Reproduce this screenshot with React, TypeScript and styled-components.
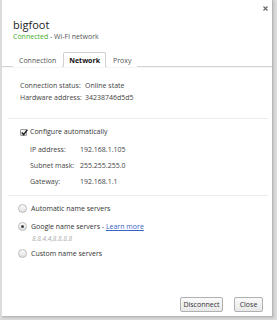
import styled, { createGlobalStyle } from "styled-components";

const Global = createGlobalStyle`
  html, body { margin: 0; padding: 0; background: #dcdcdc; }
  body { font-family: "Open Sans", "Noto Sans", sans-serif; color: #333; }
`;

const Page = styled.div`
  width: 277px;
  height: 320px;
  padding: 0 4px 3px 2px;
  box-sizing: border-box;
  display: flex;
`;

const Dialog = styled.div`
  flex: 1;
  background: #fff;
  border-right: 1px solid #b8b8b8;
  border-bottom: 1px solid #b8b8b8;
  box-shadow: 1px 1px 2px rgba(0, 0, 0, 0.12);
  display: flex;
  flex-direction: column;
  position: relative;
`;

const Header = styled.div`
  padding: 18px 0 0 11px;
  border-bottom: 1px solid #d4d4d4;
  box-shadow: 0 1px 1px rgba(0, 0, 0, 0.04);
`;

const Title = styled.div`
  font-size: 11px;
  line-height: 14px;
  color: #222;
`;

const Status = styled.div`
  font-size: 7px;
  line-height: 10px;
  color: #555;
  margin-bottom: 10px;
`;

const Green = styled.span`
  color: #3fae29;
`;

const CloseX = styled.svg`
  position: absolute;
  top: 6px;
  right: 4px;
`;

const Tabs = styled.div`
  display: flex;
  align-items: flex-end;
  margin-bottom: -1px;
`;

const Tab = styled.div<{ $active?: boolean }>`
  font-size: 7px;
  padding: 0 5px;
  height: 15px;
  line-height: 15px;
  box-sizing: border-box;
  color: ${(p) => (p.$active ? "#111" : "#555")};
  font-weight: ${(p) => (p.$active ? 700 : 400)};
  background: #fff;
  border: 1px solid ${(p) => (p.$active ? "#d0d0d0" : "transparent")};
  border-bottom-color: ${(p) => (p.$active ? "#fff" : "transparent")};
  border-radius: 2px 2px 0 0;
  margin-right: 1px;
`;

const Body = styled.div`
  flex: 1;
  padding: 13px 4px 0 6px;
  display: flex;
  flex-direction: column;
`;

const Section = styled.div<{ $pad?: string; $line?: boolean }>`
  padding: ${(p) => p.$pad || "0"};
  border-bottom: ${(p) => (p.$line ? "1px solid #ececec" : "none")};
`;

const InfoRow = styled.div<{ $indent?: number; $label?: number; $h?: number }>`
  display: flex;
  font-size: 7px;
  line-height: ${(p) => p.$h || 12}px;
  color: #444;
  padding-left: ${(p) => p.$indent || 0}px;

  & > span:first-child {
    width: ${(p) => p.$label || 65}px;
    flex-shrink: 0;
    white-space: nowrap;
  }
`;

const Check = styled.div`
  display: flex;
  align-items: center;
  gap: 3px;
  font-size: 7px;
  line-height: 12px;
  color: #333;
  padding-left: 12px;
  margin-bottom: 4px;
`;

const Box = styled.span`
  width: 7px;
  height: 7px;
  box-sizing: border-box;
  border: 1px solid #999;
  border-radius: 1px;
  background: linear-gradient(#fafafa, #e2e2e2);
  position: relative;
  display: inline-block;

  & svg {
    position: absolute;
    left: -1px;
    top: -2px;
  }
`;

const RadioRow = styled.div<{ $gap?: number }>`
  display: flex;
  align-items: center;
  gap: 4px;
  font-size: 7px;
  color: #333;
  padding-left: 10px;
  height: 12px;
  margin-bottom: ${(p) => p.$gap || 0}px;
`;

const Radio = styled.span<{ $on?: boolean }>`
  width: 9px;
  height: 9px;
  border: 1px solid #bbb;
  border-radius: 50%;
  box-sizing: border-box;
  background: linear-gradient(#fdfdfd, #e0e0e0);
  display: flex;
  align-items: center;
  justify-content: center;

  &::after {
    content: "";
    display: ${(p) => (p.$on ? "block" : "none")};
    width: 3px;
    height: 3px;
    border-radius: 50%;
    background: #444;
  }
`;

const Link = styled.span`
  color: #3a63c8;
  text-decoration: underline;
`;

const Dns = styled.div`
  font-size: 6.5px;
  font-style: italic;
  color: #aaa;
  padding-left: 24px;
  height: 15px;
  line-height: 14px;
`;

const Footer = styled.div`
  margin-top: auto;
  display: flex;
  justify-content: flex-end;
  gap: 11px;
  padding: 0 9px 4px 0;
`;

const Button = styled.button<{ $w: number }>`
  font-family: "Open Sans", "Noto Sans", sans-serif;
  font-size: 7px;
  color: #333;
  width: ${(p) => p.$w}px;
  height: 15px;
  padding: 0;
  border: 1px solid #b0b0b0;
  border-radius: 2px;
  background: linear-gradient(#fafafa, #e8e8e8);
`;

export default function App() {
  return (
    <Page>
      <Global />
      <Dialog>
        <CloseX width="5" height="5" viewBox="0 0 5 5">
          <path d="M0.5 0.5 L4.5 4.5 M4.5 0.5 L0.5 4.5" stroke="#666" strokeWidth="1.1" />
        </CloseX>
        <Header>
          <Title>bigfoot</Title>
          <Status>
            <Green>Connected</Green> - Wi-Fi network
          </Status>
          <Tabs>
            <Tab>Connection</Tab>
            <Tab $active>Network</Tab>
            <Tab>Proxy</Tab>
          </Tabs>
        </Header>
        <Body>
          <Section $line $pad="0 0 14px 12px">
            <InfoRow>
              <span>Connection status:</span>
              <span>Online state</span>
            </InfoRow>
            <InfoRow>
              <span>Hardware address:</span>
              <span>34238746d5d5</span>
            </InfoRow>
          </Section>
          <Section $line $pad="7px 0 5px 0">
            <Check>
              <Box>
                <svg width="9" height="9" viewBox="0 0 9 9">
                  <path d="M1.8 4.6 L3.6 6.6 L7.4 1.6" stroke="#222" strokeWidth="1.5" fill="none" />
                </svg>
              </Box>
              Configure automatically
            </Check>
            <InfoRow $indent={22} $label={50} $h={16}>
              <span>IP address:</span>
              <span>192.168.1.105</span>
            </InfoRow>
            <InfoRow $indent={22} $label={50} $h={16}>
              <span>Subnet mask:</span>
              <span>255.255.255.0</span>
            </InfoRow>
            <InfoRow $indent={22} $label={50} $h={16}>
              <span>Gateway:</span>
              <span>192.168.1.1</span>
            </InfoRow>
          </Section>
          <Section $pad="6px 0 0 0">
            <RadioRow $gap={6}>
              <Radio />
              Automatic name servers
            </RadioRow>
            <RadioRow>
              <Radio $on />
              <span>
                Google name servers - <Link>Learn more</Link>
              </span>
            </RadioRow>
            <Dns>8.8.4.4,8.8.8.8</Dns>
            <RadioRow>
              <Radio />
              Custom name servers
            </RadioRow>
          </Section>
        </Body>
        <Footer>
          <Button $w={43}>Disconnect</Button>
          <Button $w={29}>Close</Button>
        </Footer>
      </Dialog>
    </Page>
  );
}
